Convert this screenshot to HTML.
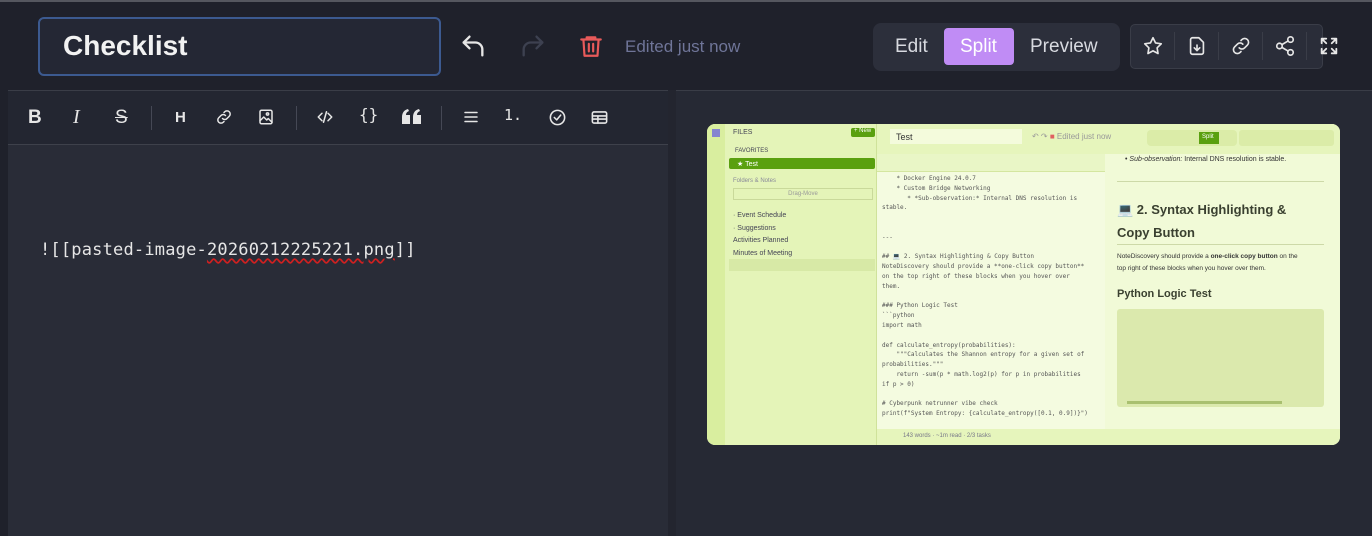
<!DOCTYPE html>
<html><head><meta charset="utf-8"><style>
*{box-sizing:border-box;margin:0;padding:0}
body{width:1372px;height:536px;background:#1f212b;font-family:"Liberation Sans","DejaVu Sans",sans-serif;overflow:hidden;position:relative}
.abs{position:absolute}
.topline{left:0;top:0;width:1372px;height:2px;background:#55575f}
.title{left:38px;top:17px;width:403px;height:59px;border:2px solid #3c5a90;border-radius:6px;background:#242734;color:#f2f2f2;font-size:28px;font-weight:bold;padding:11px 0 0 23px}
.ico{stroke:currentColor;fill:none;stroke-width:2;stroke-linecap:round;stroke-linejoin:round}
.seg{left:873px;top:23px;width:247px;height:48px;background:#2c2f3b;border-radius:8px}
.seg span{position:absolute;top:13px;font-size:19px;color:#d8dae0}
.split{left:944px;top:28px;width:70px;height:37px;background:#c08cf5;border-radius:4px}
.tools{left:1130px;top:24px;width:193px;height:45px;background:#2a2d39;border:1px solid #3a3d48;border-radius:5px}
.editor{left:8px;top:90px;width:660px;height:446px;background:#292c37;border-top:1px solid #3a3d47}
.tb{left:8px;top:91px;width:660px;height:54px;background:#232631;border-bottom:1px solid #3e414b}
.prev{left:676px;top:90px;width:696px;height:446px;background:#262934;border-top:1px solid #3a3d47}
.txt{left:40px;top:240px;font-family:"DejaVu Sans Mono","Liberation Mono",monospace;font-size:17px;color:#e6e6e6;letter-spacing:0.2px}
.shot{left:707px;top:124px;width:633px;height:321px;background:#eef8cf;border-radius:8px;overflow:hidden;font-size:7px;color:#445}
</style></head><body>
<div class="abs topline"></div>
<div class="abs title">Checklist</div>
<svg class="abs ico" style="left:459px;top:32px;color:#e6e6e6" width="28" height="28" viewBox="0 0 24 24"><path d="M9 14L4 9l5-5"/><path d="M4 9h10a6 6 0 0 1 6 6v5"/></svg>
<svg class="abs ico" style="left:519px;top:32px;color:#3d4150" width="28" height="28" viewBox="0 0 24 24"><path d="M15 14l5-5-5-5"/><path d="M20 9H10a6 6 0 0 0-6 6v5"/></svg>
<svg class="abs ico" style="left:578px;top:33px;color:#e85a5a" width="26" height="26" viewBox="0 0 24 24"><path d="M3 6h18M8 6V4h8v2M5 6l1 15h12l1-15M10 10v7M14 10v7"/></svg>
<div class="abs" style="left:625px;top:37px;color:#6f7598;font-size:17px">Edited just now</div>
<div class="abs seg"><span style="left:22px">Edit</span><span style="left:157px">Preview</span></div>
<div class="abs split"></div><div class="abs" style="left:960px;top:36px;font-size:19px;color:#fff">Split</div>
<div class="abs tools"></div>
<svg class="abs ico" style="left:1142px;top:35px;color:#e6e6e6;stroke-width:1.8" width="22" height="22" viewBox="0 0 24 24"><path d="M12 3l2.8 5.7 6.2.9-4.5 4.4 1 6.2L12 17.3 6.5 20.2l1-6.2L3 9.6l6.2-.9z"/></svg>
<svg class="abs ico" style="left:1186px;top:35px;color:#e6e6e6;stroke-width:1.8" width="22" height="22" viewBox="0 0 24 24"><path d="M14 3H7a2 2 0 0 0-2 2v14a2 2 0 0 0 2 2h10a2 2 0 0 0 2-2V8z"/><path d="M12 11v6M9 14l3 3 3-3"/></svg>
<svg class="abs ico" style="left:1230px;top:35px;color:#e6e6e6;stroke-width:1.8" width="22" height="22" viewBox="0 0 24 24"><path d="M10 14a4 4 0 0 0 6 0l3-3a4 4 0 0 0-6-6l-1 1"/><path d="M14 10a4 4 0 0 0-6 0l-3 3a4 4 0 0 0 6 6l1-1"/></svg>
<svg class="abs ico" style="left:1274px;top:35px;color:#e6e6e6;stroke-width:1.8" width="22" height="22" viewBox="0 0 24 24"><circle cx="18" cy="5" r="3"/><circle cx="6" cy="12" r="3"/><circle cx="18" cy="19" r="3"/><path d="M8.6 13.5l6.8 4M15.4 6.5l-6.8 4"/></svg>
<svg class="abs ico" style="left:1318px;top:35px;color:#e6e6e6;stroke-width:2" width="22" height="22" viewBox="0 0 24 24"><path d="M4 9V4h5M4 4l5 5M20 9V4h-5M20 4l-5 5M4 15v5h5M4 20l5-5M20 15v5h-5M20 20l-5-5"/></svg>
<div class="abs" style="left:1174px;top:32px;width:1px;height:28px;background:#3a3d48"></div>
<div class="abs" style="left:1218px;top:32px;width:1px;height:28px;background:#3a3d48"></div>
<div class="abs" style="left:1262px;top:32px;width:1px;height:28px;background:#3a3d48"></div>
<div class="abs" style="left:1306px;top:32px;width:1px;height:28px;background:#3a3d48"></div>

<div class="abs editor"></div>
<div class="abs tb"></div>
<div class="abs" style="left:28px;top:107px;color:#e6e6e6;font-size:19px;font-weight:bold">B</div>
<div class="abs" style="left:73px;top:106px;color:#e6e6e6;font-size:20px;font-family:'Liberation Serif',serif;font-style:italic">I</div>
<div class="abs" style="left:115px;top:107px;color:#e6e6e6;font-size:19px;text-decoration:line-through">S</div>
<div class="abs" style="left:151px;top:106px;width:1px;height:24px;background:#454855"></div>
<div class="abs" style="left:175px;top:109px;color:#e6e6e6;font-size:15px;font-weight:bold">H</div>
<svg class="abs ico" style="left:215px;top:108px;color:#e6e6e6" width="18" height="18" viewBox="0 0 24 24"><path d="M10 14a4 4 0 0 0 6 0l3-3a4 4 0 0 0-6-6l-1 1"/><path d="M14 10a4 4 0 0 0-6 0l-3 3a4 4 0 0 0 6 6l1-1"/></svg>
<svg class="abs ico" style="left:257px;top:108px;color:#e6e6e6" width="18" height="18" viewBox="0 0 24 24"><rect x="4" y="3" width="16" height="18" rx="2"/><circle cx="14" cy="8" r="1.5"/><path d="M4 17l5-5 4 4 2-2 5 5"/></svg>
<div class="abs" style="left:296px;top:106px;width:1px;height:24px;background:#454855"></div>
<svg class="abs ico" style="left:316px;top:108px;color:#e6e6e6" width="18" height="18" viewBox="0 0 24 24"><path d="M8 7l-5 5 5 5M16 7l5 5-5 5M14 5l-4 14"/></svg>
<div class="abs" style="left:359px;top:105px;color:#e6e6e6;font-size:16px;font-family:'DejaVu Sans Mono',monospace">{}</div>
<svg class="abs" style="left:402px;top:109px" width="20" height="17" viewBox="0 0 20 17"><g fill="#e6e6e6"><path d="M0 8c0-4 2-7 6-8l1 2c-2 1-3 2-3 4h4v9H0z"/><path d="M11 8c0-4 2-7 6-8l1 2c-2 1-3 2-3 4h4v9h-8z"/></g></svg>
<div class="abs" style="left:441px;top:106px;width:1px;height:24px;background:#454855"></div>
<svg class="abs ico" style="left:462px;top:108px;color:#e6e6e6" width="18" height="18" viewBox="0 0 24 24"><path d="M4 6h16M4 12h16M4 18h16"/></svg>
<div class="abs" style="left:504px;top:106px;color:#e6e6e6;font-size:15px;font-family:'DejaVu Sans Mono',monospace">1.</div>
<svg class="abs ico" style="left:548px;top:108px;color:#e6e6e6" width="19" height="19" viewBox="0 0 24 24"><circle cx="12" cy="12" r="9"/><path d="M8 12l3 3 5-6"/></svg>
<svg class="abs ico" style="left:590px;top:108px;color:#e6e6e6" width="19" height="19" viewBox="0 0 24 24"><rect x="3" y="5" width="18" height="14" rx="2"/><path d="M3 10h18M3 14h18M10 10v9"/></svg>
<div class="abs txt">![[pasted-image-<span style="text-decoration:underline wavy #d02020;text-underline-offset:3px">20260212225221.png</span>]]</div>
<div class="abs" style="left:668px;top:90px;width:8px;height:446px;background:#23252f"></div>
<div class="abs prev"></div>

<div class="abs shot">
 <div class="abs" style="left:0;top:0;width:18px;height:321px;background:#d9ee9f"></div>
 <div class="abs" style="left:5px;top:5px;width:8px;height:8px;background:#8585d0"></div>
 <div class="abs" style="left:18px;top:0;width:152px;height:321px;background:#e4f4b8;border-right:1px solid #cfe29a"></div>
 <div class="abs" style="left:26px;top:5px">FILES</div>
 <div class="abs" style="left:144px;top:4px;width:24px;height:9px;background:#5aa00f;border-radius:2px;color:#fff;font-size:6px;padding-left:3px">+ New</div>
 <div class="abs" style="left:28px;top:24px;font-size:6px">FAVORITES</div>
 <div class="abs" style="left:22px;top:34px;width:146px;height:11px;background:#5aa00f;border-radius:2px;color:#fff;padding:2px 0 0 8px">★ Test</div>
 <div class="abs" style="left:26px;top:54px;font-size:6px;color:#889">Folders &amp; Notes</div>
 <div class="abs" style="left:26px;top:64px;width:140px;height:12px;border:1px solid #c9d99a;font-size:6px;text-align:center;padding-top:2px;color:#999">Drag-Move</div>
 <div class="abs" style="left:26px;top:86px;line-height:12.5px">· Event Schedule<br>· Suggestions<br>Activities Planned<br>Minutes of Meeting<br>Test</div>
 <div class="abs" style="left:22px;top:135px;width:146px;height:12px;background:#d7e9a6"></div>
 <div class="abs" style="left:170px;top:0;width:228px;height:321px;background:#f4fbe0"></div>
 <div class="abs" style="left:170px;top:0;width:463px;height:30px;background:#e6f5bc"></div>
 <div class="abs" style="left:183px;top:5px;width:132px;height:15px;background:#f4fbdc;font-size:9px;padding:3px 0 0 6px;color:#333">Test</div>
 <div class="abs" style="left:325px;top:8px;font-size:8px;color:#999">↶ ↷ <span style="color:#e06060">■</span> Edited just now</div>
 <div class="abs" style="left:440px;top:6px;width:90px;height:16px;background:#dbeca8;border-radius:4px"></div>
 <div class="abs" style="left:492px;top:8px;width:20px;height:12px;background:#5aa00f;color:#fff;font-size:6px;padding:2px 0 0 3px">Split</div>
 <div class="abs" style="left:532px;top:6px;width:95px;height:16px;background:#dbeca8;border-radius:3px"></div>
 <div class="abs" style="left:170px;top:30px;width:228px;height:18px;background:#e9f6c6;border-bottom:1px solid #d4e6a0"></div>
 <div class="abs" style="left:175px;top:50px;font-family:'DejaVu Sans Mono',monospace;font-size:6px;line-height:9.8px;white-space:pre;color:#555">    * Docker Engine 24.0.7
    * Custom Bridge Networking
       * *Sub-observation:* Internal DNS resolution is
stable.


---

## 💻 2. Syntax Highlighting &amp; Copy Button
NoteDiscovery should provide a **one-click copy button**
on the top right of these blocks when you hover over
them.

### Python Logic Test
&#96;&#96;&#96;python
import math

def calculate_entropy(probabilities):
    """Calculates the Shannon entropy for a given set of
probabilities."""
    return -sum(p * math.log2(p) for p in probabilities
if p &gt; 0)

# Cyberpunk netrunner vibe check
print(f"System Entropy: {calculate_entropy([0.1, 0.9])}")</div>
 <div class="abs" style="left:170px;top:305px;width:463px;height:16px;background:#e6f5bc;font-size:6px;padding:4px 0 0 26px;color:#778">143 words · ~1m read · 2/3 tasks</div>
 <div class="abs" style="left:398px;top:30px;width:235px;height:275px;background:#f1fad7"></div>
 <div class="abs" style="left:418px;top:32px;font-size:7px;color:#333">• <i>Sub-observation:</i> Internal DNS resolution is stable.</div>
 <div class="abs" style="left:410px;top:57px;width:207px;height:1px;background:#cdd9a8"></div>
 <div class="abs" style="left:410px;top:74px;font-size:13px;font-weight:bold;line-height:23px;color:#3a4030">💻 2. Syntax Highlighting &amp;<br>Copy Button</div>
 <div class="abs" style="left:410px;top:120px;width:207px;height:1px;background:#cdd9a8"></div>
 <div class="abs" style="left:410px;top:127px;font-size:6.5px;line-height:12px;color:#333">NoteDiscovery should provide a <b>one-click copy button</b> on the<br>top right of these blocks when you hover over them.</div>
 <div class="abs" style="left:410px;top:164px;font-size:11px;font-weight:bold;color:#3a4030">Python Logic Test</div>
 <div class="abs" style="left:410px;top:185px;width:207px;height:98px;background:#dbe9ad;border-radius:3px"></div>
 <div class="abs" style="left:420px;top:277px;width:155px;height:3px;background:#a9c070"></div>
</div>
</body></html>
